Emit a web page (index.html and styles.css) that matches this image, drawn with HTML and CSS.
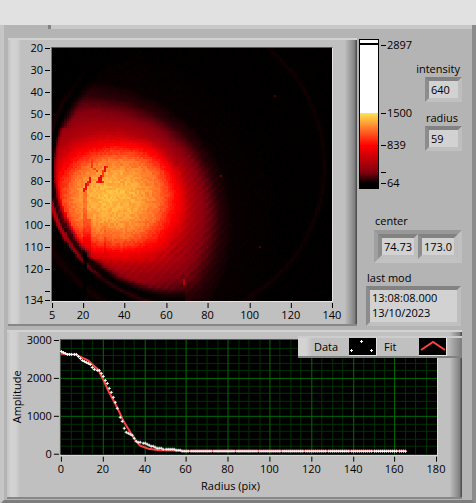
FILE: index.html
```html
<!DOCTYPE html>
<html lang="en">
<head>
  <meta charset="UTF-8">
  <meta name="viewport" content="width=device-width, initial-scale=1.0">
  <title>Beam profile</title>
  <link rel="stylesheet" href="styles.css">
</head>
<body>
  <header class="topbar"></header>
  <main class="page">
    <div class="tab-edge"></div>
    <div class="upper">
      <section class="panel image-panel">
        <svg class="axis-y" viewBox="0 0 30 270" width="30" height="270" id="imageY"></svg>
        <div class="image-col">
          <canvas id="image" width="135" height="114"></canvas>
          <svg class="axis-x" viewBox="0 0 281 23" id="imageX"></svg>
        </div>
      </section>
      <section class="side">
        <div class="side-top">
          <svg class="ramp" viewBox="0 0 53 152" width="53" height="152" id="ramp">
            <defs>
              <linearGradient id="heat" x1="0" y1="0" x2="0" y2="1">
                <stop offset="0" stop-color="#ffe650"/>
                <stop offset="0.44" stop-color="#ff0000"/>
                <stop offset="0.8" stop-color="#82000f"/>
                <stop offset="0.95" stop-color="#000000"/>
              </linearGradient>
            </defs>
            <rect x="0" y="0" width="20" height="150" fill="#000"/>
            <rect x="1" y="1" width="18" height="74" fill="#fff"/>
            <rect x="1" y="4" width="18" height="2" fill="#000"/>
            <rect x="1" y="74" width="18" height="74" fill="url(#heat)"/>
          </svg>
          <div class="controls">
            <label for="intensity">intensity</label>
            <input class="field small" id="intensity" value="640" readonly>
            <label class="radius-label" for="radius">radius</label>
            <input class="field small" id="radius" value="59" readonly>
          </div>
        </div>
        <label class="center-label" for="centerX">center</label>
        <div class="cluster">
          <input class="field" id="centerX" value="74.73" readonly>
          <input class="field" id="centerY" value="173.0" aria-label="center y" readonly>
        </div>
        <label class="mod-label" for="lastMod">last mod</label>
        <textarea class="field stamp" id="lastMod" rows="2" readonly>13:08:08.000
13/10/2023</textarea>
      </section>
    </div>
    <section class="panel graph-panel">
      <svg class="graph" viewBox="0 0 436 161" id="graph">
        <text text-anchor="middle" transform="translate(10 65) rotate(-90)">Amplitude</text>
        <text text-anchor="middle" x="220" y="158">Radius (pix)</text>
      </svg>
      <div class="legend">
        <span>Data</span>
        <svg viewBox="0 0 28 18" width="28" height="18">
          <rect width="28" height="18" fill="#e4e4e4"/>
          <rect width="27" height="17" fill="#000"/>
          <path d="M1 12h3v1h-3zM2 11h1v3h-1zM11 3h3v1h-3zM12 2h1v3h-1zM21 12h3v1h-3zM22 11h1v3h-1z" fill="#fff"/>
        </svg>
        <span class="fit">Fit</span>
        <svg viewBox="0 0 28 18" width="28" height="18">
          <rect width="28" height="18" fill="#e4e4e4"/>
          <rect width="27" height="17" fill="#000"/>
          <path d="M2 12L14 4L26 12" fill="none" stroke="#ff4141" stroke-width="2"/>
        </svg>
      </div>
    </section>
  </main>
  <script src="script.js"></script>
</body>
</html>
```

FILE: styles.css
```css
* {
  box-sizing: border-box;
}
body {
  margin: 0;
  background: #b4b4b4;
  color: #000;
  font-family: "Open Sans", "Noto Sans", sans-serif;
  font-size: 11px;
  line-height: 16px;
}
svg, canvas {
  display: block;
}
.topbar {
  height: 25px;
  background: #e1e1e1;
}
.page {
  border-style: solid;
  border-width: 0 4px 4px;
  border-color: #b4b4b4 #8c8c8c #7d7d7d #c6c6c6;
  padding: 0 10px 1px 3px;
}
.tab-edge {
  height: 4px;
  margin: 0 -10px 9px 41px;
  border-left: 3px solid #828282;
  background: #c8c8c8;
}
.upper {
  display: flex;
  gap: 2px;
  padding-left: 1px;
}
.panel {
  background:
    linear-gradient(to right, #c3c3c3, #d3d3d3 4px, #d0d0d0 9px, #c0c0c0 13px, transparent 13px),
    linear-gradient(to left, #505050 1px, #7d7d7d 2px, #929292 5px, #bebebe 12px, transparent 12px),
    #c0c0c0;
  border-top: 2px solid #d2d2d2;
  border-bottom: 2px solid #878787;
}
.image-panel {
  flex: 1;
  display: flex;
  height: 288px;
  padding: 0 24px 0 13px;
}
.axis-y {
  flex: none;
}
.image-col {
  flex: 1;
  padding-top: 7px;
}
#image {
  width: 100%;
  height: 255px;
  border: 1px solid #545a54;
  border-color: #545a54 #e4e4e4 #e4e4e4 #727272;
  background: #000;
  image-rendering: pixelated;
}
.axis-x {
  width: 100%;
  overflow: visible;
}
.side {
  width: 103px;
  padding-top: 1px;
  display: flex;
  flex-direction: column;
}
.side-top {
  display: flex;
  height: 174px;
}
.ramp {
  flex: none;
  overflow: visible;
}
.controls {
  flex: 1;
  padding-top: 22px;
  display: flex;
  flex-direction: column;
  align-items: flex-end;
}
.controls label {
  padding-right: 2px;
}
.controls .radius-label {
  margin-top: 8px;
  padding-right: 4px;
}
.field {
  display: block;
  min-width: 0;
  height: 25px;
  margin: 0;
  padding: 0 0 0 2px;
  border: 4px solid;
  border-color: #828282 #bebebe #c0c0c0 #8c8c8c;
  border-radius: 0;
  background: #d2d2d2;
  color: #000;
  font: 11px/15px "Open Sans", "Noto Sans", sans-serif;
  outline: none;
}
.small {
  width: 37px;
}
.center-label {
  padding-left: 16px;
}
.cluster {
  display: grid;
  grid-template-columns: 1fr 1fr;
  width: 88px;
  margin: 1px 0 0 auto;
  border: 4px solid;
  border-color: #989898 #c0c0c0 #c2c2c2 #a0a0a0;
}
.cluster .field {
  width: 100%;
}
.mod-label {
  padding: 7px 0 0 8px;
}
.stamp {
  width: 95px;
  height: 40px;
  margin-left: 7px;
  resize: none;
  overflow: hidden;
}
.graph-panel {
  position: relative;
  height: 169px;
  margin-top: 4px;
  padding: 0 16px 0 4px;
}
.graph {
  width: 100%;
  overflow: visible;
}
.legend {
  position: absolute;
  top: 4px;
  right: 0;
  display: flex;
  align-items: center;
  width: 164px;
  height: 22px;
  padding-left: 16px;
  border-top: 2px solid #cdcdcd;
  border-bottom: 2px solid #828282;
  background: linear-gradient(to right, #d3d3d3 8px, #c0c0c0 14px, #c0c0c0 149px, #808080 163px);
}
.legend span {
  width: 35px;
}
.legend .fit {
  margin-left: 7px;
}
```

FILE: script.js
```javascript
const NS = 'http://www.w3.org/2000/svg';

function add(parent, name, attrs, text) {
  const el = document.createElementNS(NS, name);
  for (const key in attrs) el.setAttribute(key, attrs[key]);
  if (text !== undefined) el.textContent = text;
  parent.appendChild(el);
}

function rect(parent, x, y, width, height, fill) {
  add(parent, 'rect', { x: Math.round(x), y: Math.round(y), width, height, fill });
}

// linear interpolation in a list of [x, y] points
function lerp(table, x) {
  if (x <= table[0][0]) return table[0][1];
  for (let i = 1; i < table.length; i++) {
    const [x0, y0] = table[i - 1];
    const [x1, y1] = table[i];
    if (x <= x1) return y0 + (y1 - y0) * (x - x0) / (x1 - x0);
  }
  return table[table.length - 1][1];
}

// image axes
const imageY = document.getElementById('imageY');
[20, 30, 40, 50, 60, 70, 80, 90, 100, 110, 120, 130, 134].forEach(v => {
  const y = 8 + (v - 20) * 2.212;
  rect(imageY, 24, y, 5, 1, '#000');
  if (v !== 130) add(imageY, 'text', { x: 22, y: Math.round(y) + 4, 'text-anchor': 'end' }, v);
});
const imageX = document.getElementById('imageX');
[5, 20, 40, 60, 80, 100, 120, 140].forEach(v => {
  const x = 1 + (v - 5) * 2.07;
  rect(imageX, x, 1, 1, 5, '#000');
  add(imageX, 'text', { x: Math.round(x), y: 17, 'text-anchor': 'middle' }, v);
});

// colour ramp scale
const ramp = document.getElementById('ramp');
[[6, 2897], [74, 1500], [106, 839], [133, ''], [144, 64]].forEach(([y, label]) => {
  rect(ramp, 22, y, 5, 1, '#000');
  add(ramp, 'text', { x: 28, y: y + 4 }, label);
});

// camera image
const colours = [
  [64, [0, 0, 0]], [250, [130, 0, 15]], [839, [255, 0, 0]], [1500, [255, 230, 80]]
];
function colour(v) {
  return [0, 1, 2].map(c => lerp(colours.map(([p, rgb]) => [p, rgb[c]]), v));
}

// spot outline: angle (clockwise from the right), then the radius where
// it is orange, red, dark red and black
const spot = [
  [0, 59, 70, 96, 122],
  [22, 58, 71, 103, 134],
  [45, 56, 69, 110, 148],
  [68, 51, 61, 96, 140],
  [90, 47, 57, 84, 125],
  [135, 47, 57, 80, 110],
  [180, 45, 54, 80, 110],
  [210, 44, 54, 84, 120],
  [235, 42, 54, 90, 126],
  [255, 42, 51, 88, 122],
  [270, 43, 52, 83, 114],
  [290, 46, 55, 81, 108],
  [305, 50, 60, 83, 107],
  [320, 54, 64, 85, 109],
  [340, 58, 68, 90, 115],
  [360, 59, 70, 96, 122]
];
function spotValue(x, y) {
  const dx = x - 57;
  const dy = y - 148;
  const angle = (Math.atan2(dy, dx) * 180 / Math.PI + 360) % 360;
  const [a, r, d, b] = [1, 2, 3, 4].map(k => lerp(spot.map(s => [s[0], s[k]]), angle));
  return lerp([
    [0, 1390], [a * 0.5, 1310], [a * 0.85, 1160], [a, 1020], [r, 800],
    [r * 0.6 + d * 0.4, 480], [d, 245], [d * 0.5 + b * 0.5, 125], [b, 76], [b * 1.4, 66]
  ], Math.hypot(dx, dy));
}

let seed = 7;
function noise() {
  seed = (seed * 16807) % 2147483647;
  return seed / 2147483647 - 0.5;
}
function ring(d, r, w, amp) {
  return amp * Math.exp(-((d - r) ** 2) / (w * w));
}

const ctx = document.getElementById('image').getContext('2d');
const img = ctx.createImageData(135, 114);
for (let j = 0; j < 114; j++) {
  for (let i = 0; i < 135; i++) {
    const x = (i + 0.5) * 2.08;
    const y = (j + 0.5) * 2.22;
    let v = spotValue(x, y);
    // fringes in the lower right
    if (x + y > 240 && v < 600) v += Math.sin((x + y) * 0.75) * (v - 64) * 0.13;
    // aperture edge with its diffraction rings
    const d = Math.hypot(x - 133, y - 120);
    if (x < 133) {
      const soft = y < 80 || y > 210 ? 10 : 5;
      v = 64 + (v - 64) * Math.min(1, Math.max(0, (132 - d) / soft));
      const low = Math.max(0, Math.min(1, (y - 135) / 30)) * Math.max(0.06, Math.min(1, (235 - y) / 60));
      const high = Math.max(0, Math.min(1, (y - 20) / 40));
      v += ring(d, 138, 2, 38 * high + 430 * low) + ring(d, 133, 1.5, 120 * low) + ring(d, 156, 4, y > 120 ? 28 : 0);
    } else {
      v += ring(Math.hypot(x - 121, y - 118), 152, 2, 22);
    }
    // scratches
    if (x > 31 && x < 35 && y > 143) v -= 130;
    if (x > 35 && x < 39 && y > 170 && y < 206) v -= 160;
    if (x > 51 && x < 54 && y > 178 && y < 206) v -= 90;
    v += noise() * Math.max(9, (v - 64) * 0.085);
    const rgb = colour(v);
    img.data.set([rgb[0], rgb[1], rgb[2], 255], (j * 135 + i) * 4);
  }
}
ctx.putImageData(img, 0, 0);
[
  [18, 58, 1, 3, '#f00a08'], [17, 60, 1, 2, '#f82008'], [16, 61, 1, 3, '#f00808'], [15, 63, 1, 2, '#f01008'],
  [22, 58, 2, 3, '#ee0808'], [21, 60, 1, 1, '#ff3010'], [23, 57, 1, 2, '#e80808'], [24, 60, 1, 1, '#fa3010'],
  [24, 55, 1, 3, '#ff3810'], [25, 53, 1, 3, '#e80808'], [26, 53, 1, 1, '#fa3010'],
  [19, 50, 1, 4, '#ff3810'], [20, 54, 1, 1, '#ff4818'], [21, 55, 1, 1, '#ff3810'],
  [63, 104, 1, 3, '#b8000c'], [107, 21, 1, 1, '#50000a'], [81, 57, 1, 1, '#70000c'], [100, 89, 1, 1, '#50000a']
].forEach(([x, y, w, h, fill]) => {
  ctx.fillStyle = fill;
  ctx.fillRect(x, y, w, h);
});

// radial profile graph
const graph = document.getElementById('graph');
const gx = v => 50 + v * 2.09;
const gy = v => 122 - v * 0.038;
rect(graph, 49, 7, 379, 117, '#e4e4e4');
rect(graph, 49, 7, 378, 116, '#545a54');
rect(graph, 50, 8, 377, 115, '#000');
for (let v = 5; v < 180; v += 5) if (v % 20) rect(graph, gx(v), 8, 1, 115, '#003200');
for (let v = 200; v < 3000; v += 200) if (v % 1000) rect(graph, 50, gy(v), 377, 1, '#003200');
for (let v = 0; v <= 180; v += 20) {
  if (v && v < 180) rect(graph, gx(v), 8, 1, 115, '#006e00');
  rect(graph, gx(v), 125, 1, 5, '#000');
  add(graph, 'text', { x: Math.round(gx(v)), y: 141, 'text-anchor': 'middle' }, v);
}
for (let v = 0; v <= 3000; v += 1000) {
  if (v && v < 3000) rect(graph, 50, gy(v), 377, 1, '#006e00');
  rect(graph, 43, gy(v), 5, 1, '#000');
  add(graph, 'text', { x: 41, y: Math.round(gy(v)) + 4, 'text-anchor': 'end' }, v);
}

const fit = [
  [0, 2640], [7, 2620], [13, 2460], [18, 2210], [20, 1990], [23, 1630], [27, 1220], [30, 860],
  [33, 590], [36, 330], [38, 210], [42, 130], [47, 90], [60, 80], [165, 80]
];
const data = [
  [0, 2700], [2, 2650], [7, 2620], [10, 2480], [14, 2360], [16, 2230], [18, 2200], [20, 2050],
  [22, 1860], [24, 1620], [26, 1370], [27, 1200], [28, 980], [29, 870], [30, 680], [31, 590],
  [34, 490], [36, 340], [40, 280], [44, 200], [47, 150], [53, 130], [60, 75], [165, 75]
];
add(graph, 'polyline', {
  points: fit.map(([x, y]) => gx(x) + ',' + gy(y)).join(' '),
  fill: 'none', stroke: '#ff4141', 'stroke-width': 2
});
for (let r = 0; r <= 165; r++) {
  const x = Math.round(gx(r));
  const y = Math.round(gy(lerp(data, r)));
  rect(graph, x - 1, y, 3, 1, '#fff');
  rect(graph, x, y - 1, 1, 3, '#fff');
}
```
